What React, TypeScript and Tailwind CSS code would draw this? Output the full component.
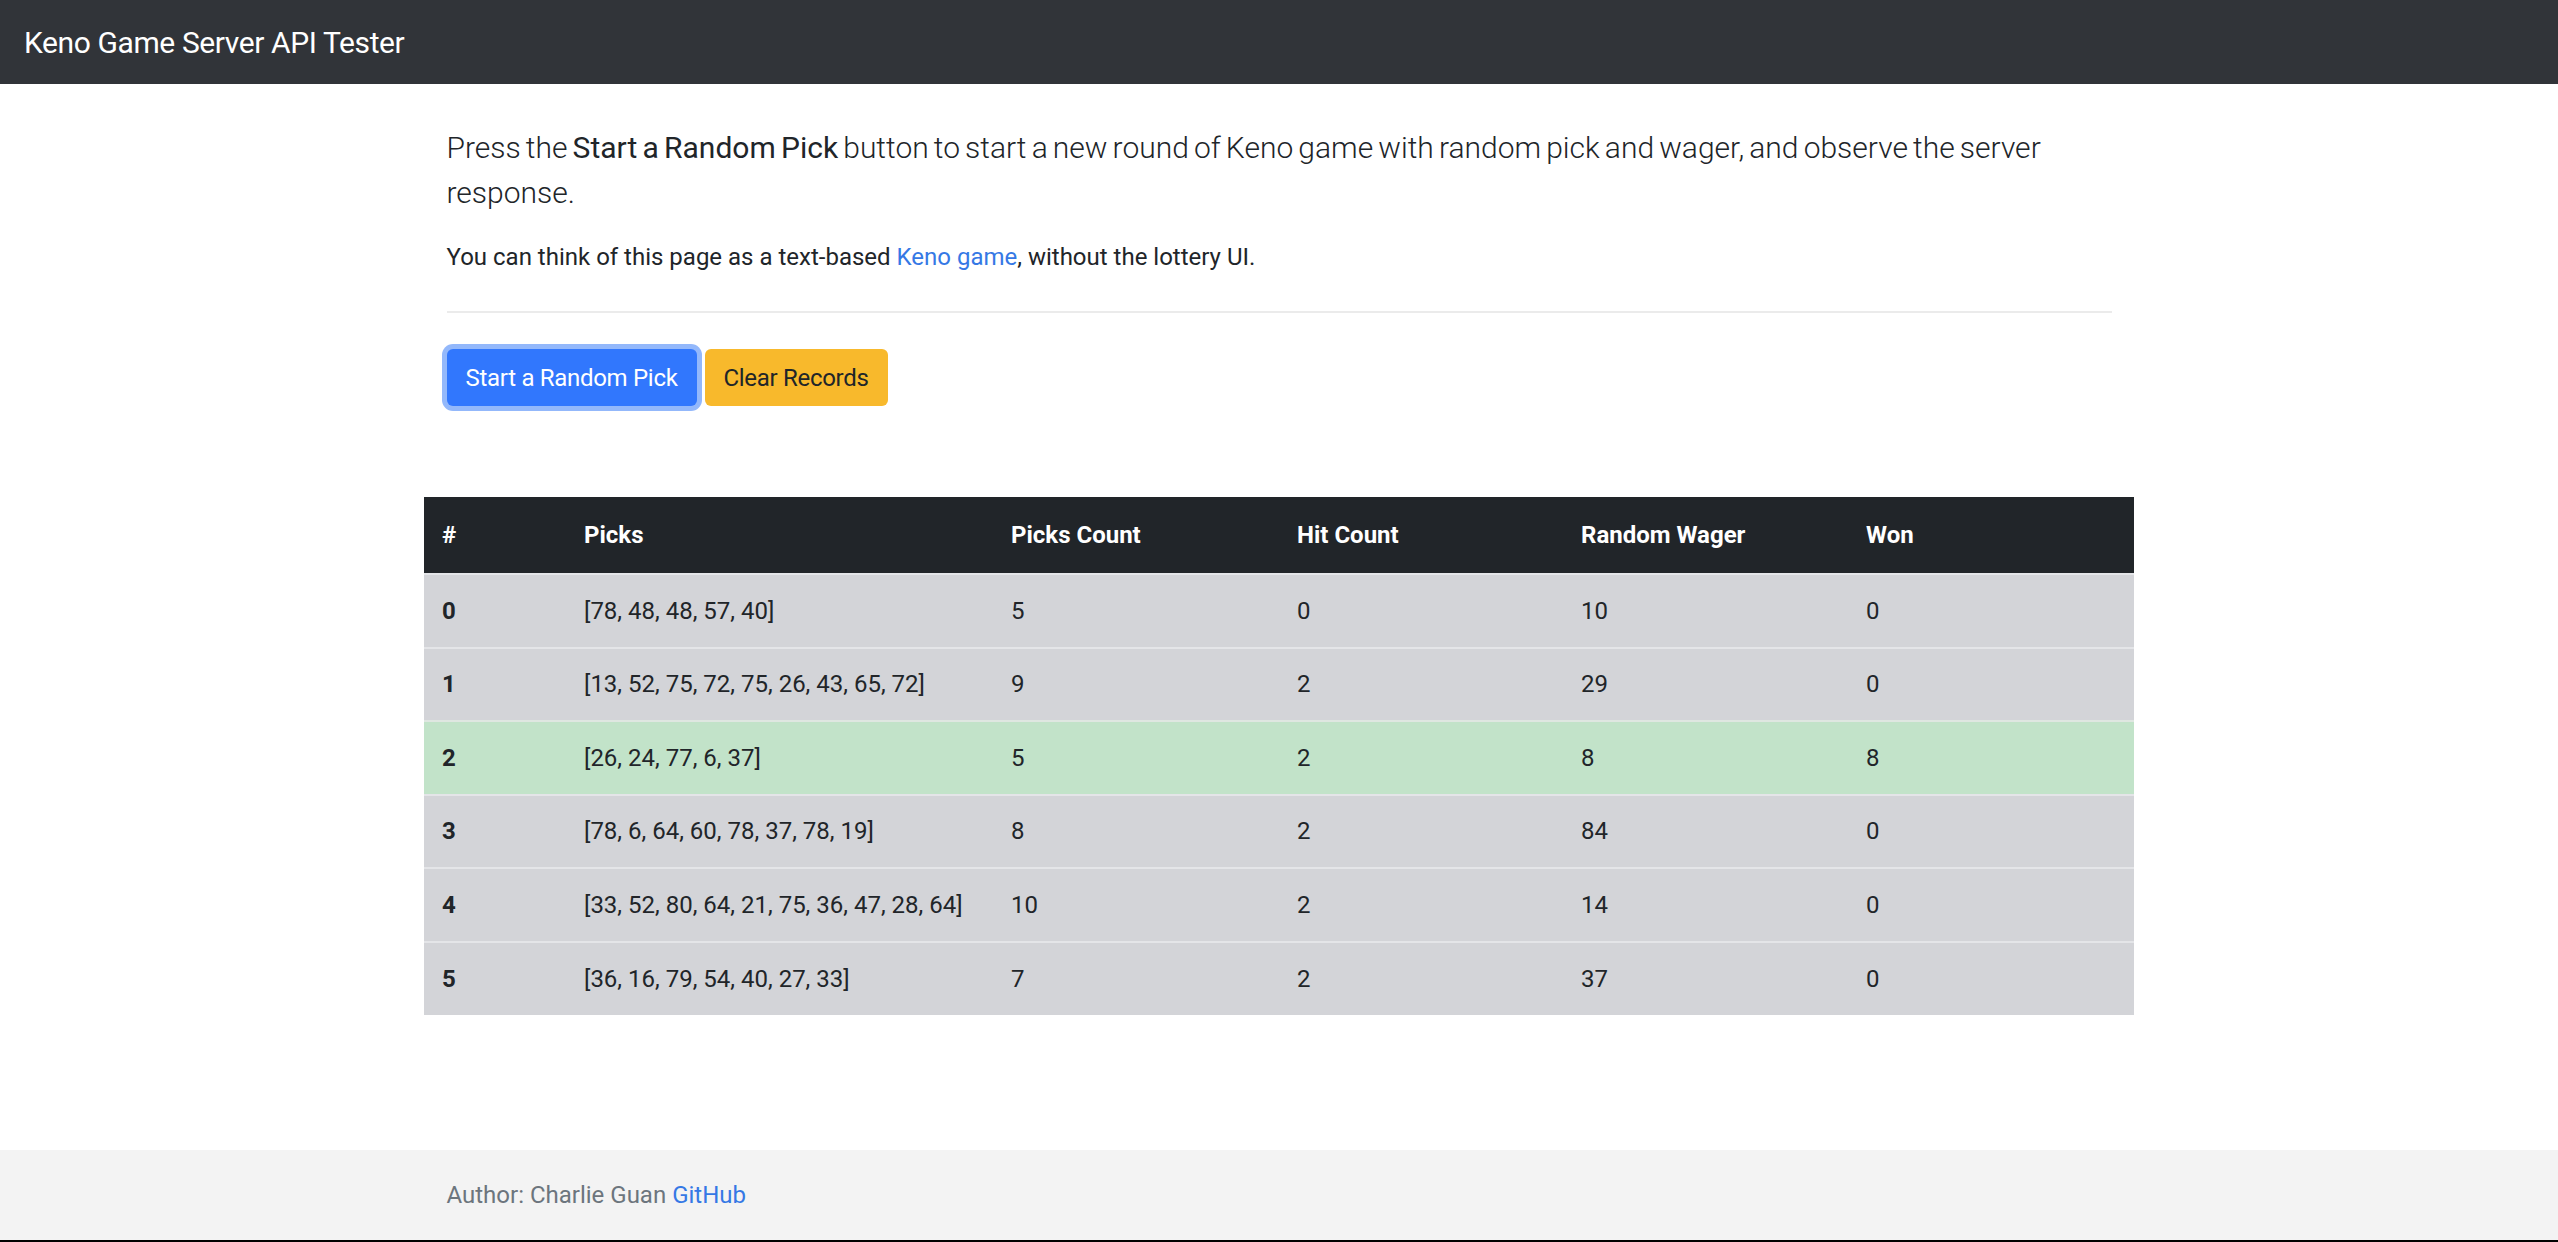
import React from "react";

type Round = {
  id: number;
  picks: number[];
  hits: number;
  wager: number;
  won: number;
};

const ROUNDS: Round[] = [
  { id: 0, picks: [78, 48, 48, 57, 40], hits: 0, wager: 10, won: 0 },
  { id: 1, picks: [13, 52, 75, 72, 75, 26, 43, 65, 72], hits: 2, wager: 29, won: 0 },
  { id: 2, picks: [26, 24, 77, 6, 37], hits: 2, wager: 8, won: 8 },
  { id: 3, picks: [78, 6, 64, 60, 78, 37, 78, 19], hits: 2, wager: 84, won: 0 },
  { id: 4, picks: [33, 52, 80, 64, 21, 75, 36, 47, 28, 64], hits: 2, wager: 14, won: 0 },
  { id: 5, picks: [36, 16, 79, 54, 40, 27, 33], hits: 2, wager: 37, won: 0 },
];

function Navbar() {
  return (
    <nav className="h-[84px] bg-[#313439] flex items-center px-[24px]">
      <span className="text-[30px] leading-[45px] tracking-[-0.4px] text-white">Keno Game Server API Tester</span>
    </nav>
  );
}

function Intro() {
  return (
    <div className="w-[1665px] mx-auto pt-[41px]">
      <p className="text-[30px] leading-[45px] [word-spacing:-2.2px] font-light text-[#212529] mb-[24px]">
        <span>Press the </span>
        <strong className="font-normal">Start a Random Pick</strong>
        <span> button to start a new round of Keno game with random pick and wager, and observe the server</span>{" "}
        <span>response.</span>
      </p>
      <p className="text-[24px] leading-[36px] text-[#212529]">
        You can think of this page as a text-based{" "}
        <a href="#" className="text-[#3578e5]">
          Keno game
        </a>
        , without the lottery UI.
      </p>
      <hr className="my-[36px] border-0 border-t-[2px] border-[#ebebeb]" />
      <div className="flex gap-[8px]">
        <button
          type="button"
          className="h-[57px] px-[19px] rounded-[6px] bg-[#3177fd] text-white text-[24px] leading-[36px] tracking-[-0.3px] shadow-[0_0_0_5px_#93b8fb]"
        >
          Start a Random Pick
        </button>
        <button
          type="button"
          className="h-[57px] px-[19px] rounded-[6px] bg-[#f8b92c] text-[#212529] text-[24px] leading-[36px] tracking-[-0.3px]"
        >
          Clear Records
        </button>
      </div>
    </div>
  );
}

function RecordsTable() {
  return (
    <div className="w-[1710px] mx-auto mt-[91px]">
      <table className="w-full table-fixed border-collapse text-[24px] leading-[36px] text-[#212529]">
        <thead>
          <tr className="bg-[#212529] text-white text-left">
            <th className="w-[142px] h-[77px] px-[18px] font-bold">#</th>
            <th className="w-[427px] h-[77px] px-[18px] font-bold">Picks</th>
            <th className="w-[286px] h-[77px] px-[18px] font-bold">Picks Count</th>
            <th className="w-[284px] h-[77px] px-[18px] font-bold">Hit Count</th>
            <th className="w-[285px] h-[77px] px-[18px] font-bold">Random Wager</th>
            <th className="h-[77px] px-[18px] font-bold">Won</th>
          </tr>
        </thead>
        <tbody>
          {ROUNDS.map((r) => (
            <tr
              key={r.id}
              className={
                r.won > 0
                  ? "bg-[#c2e3c9] border-t-[2px] border-[#dfe7e1]"
                  : "bg-[#d3d4d8] border-t-[2px] border-[#e4e5e8]"
              }
            >
              <th scope="row" className="h-[73.5px] px-[18px] text-left font-bold">
                {r.id}
              </th>
              <td className="h-[73.5px] px-[18px] whitespace-nowrap">[{r.picks.join(", ")}]</td>
              <td className="h-[73.5px] px-[18px]">{r.picks.length}</td>
              <td className="h-[73.5px] px-[18px]">{r.hits}</td>
              <td className="h-[73.5px] px-[18px]">{r.wager}</td>
              <td className="h-[73.5px] px-[18px]">{r.won}</td>
            </tr>
          ))}
        </tbody>
      </table>
    </div>
  );
}

function Footer() {
  return (
    <footer className="h-[92px] bg-[#f3f3f3] border-b-[2px] border-black">
      <div className="w-[1665px] mx-auto h-full flex items-center text-[24px] leading-[36px] text-[#6c757d]">
        <span>
          Author: Charlie Guan{" "}
          <a href="#" className="text-[#3578e5]">
            GitHub
          </a>
        </span>
      </div>
    </footer>
  );
}

export default function App() {
  return (
    <div className="min-h-screen flex flex-col bg-white font-['Roboto','Segoe_UI',sans-serif]">
      <Navbar />
      <main className="flex-1">
        <Intro />
        <RecordsTable />
      </main>
      <Footer />
    </div>
  );
}
